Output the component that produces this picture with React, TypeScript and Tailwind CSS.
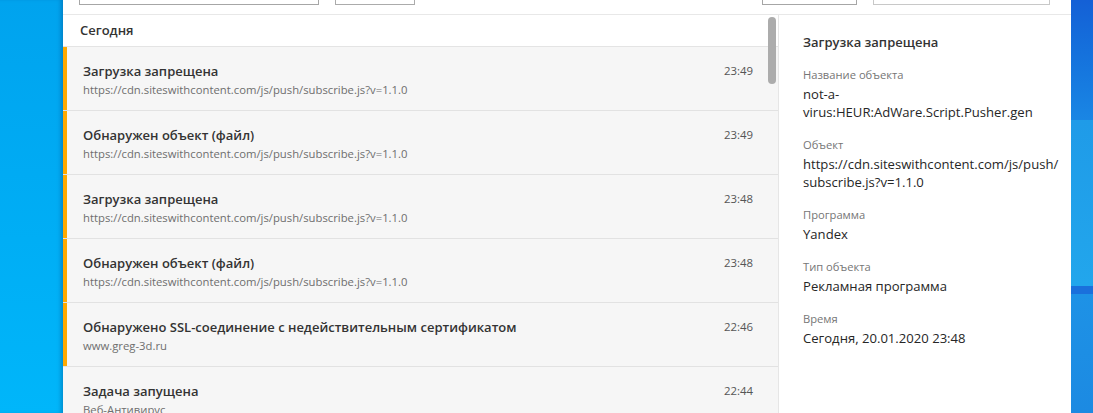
const events = [
  { title: 'Загрузка запрещена', sub: 'https://cdn.siteswithcontent.com/js/push/subscribe.js?v=1.1.0', time: '23:49', warn: true },
  { title: 'Обнаружен объект (файл)', sub: 'https://cdn.siteswithcontent.com/js/push/subscribe.js?v=1.1.0', time: '23:49', warn: true },
  { title: 'Загрузка запрещена', sub: 'https://cdn.siteswithcontent.com/js/push/subscribe.js?v=1.1.0', time: '23:48', warn: true },
  { title: 'Обнаружен объект (файл)', sub: 'https://cdn.siteswithcontent.com/js/push/subscribe.js?v=1.1.0', time: '23:48', warn: true },
  { title: 'Обнаружено SSL-соединение с недействительным сертификатом', sub: 'www.greg-3d.ru', time: '22:46', warn: true },
  { title: 'Задача запущена', sub: 'Веб-Антивирус', time: '22:44', warn: false },
]

const details = [
  { label: 'Название объекта', value: 'not-a-virus:HEUR:AdWare.Script.Pusher.gen' },
  { label: 'Объект', value: 'https://cdn.siteswithcontent.com/js/push/subscribe.js?v=1.1.0' },
  { label: 'Программа', value: 'Yandex' },
  { label: 'Тип объекта', value: 'Рекламная программа' },
  { label: 'Время', value: 'Сегодня, 20.01.2020 23:48' },
]

export default function App() {
  return (
    <div className="w-[1093px] h-[413px] flex overflow-hidden font-['Open_Sans',sans-serif]">
      {/* desktop left */}
      <div className="w-[63px] shrink-0 bg-gradient-to-b from-[#00a3ee] to-[#00b6fa] shadow-[inset_-4px_0_4px_-2px_rgba(0,60,120,0.35)]" />

      {/* window */}
      <div className="w-[1008px] shrink-0 bg-white flex flex-col">
        {/* toolbar, inputs cut off at top */}
        <div className="h-[15px] border-b border-[#e8e8e8] overflow-hidden flex items-end pb-[9px]">
          <div className="ml-[16px] w-[240px] h-[30px] border border-[#a6a6a6] shrink-0" />
          <div className="ml-[16px] w-[80px] h-[30px] border border-[#ababab] shrink-0" />
          <div className="ml-auto w-[95px] h-[30px] border border-[#a6a6a6] shrink-0" />
          <div className="ml-[16px] mr-[21px] w-[177px] h-[30px] border border-[#c8c8c8] shrink-0" />
        </div>

        <div className="flex flex-1 min-h-0">
          {/* events list */}
          <div className="relative w-[716px] shrink-0 border-r border-[#e6e6e6] bg-[#f6f6f6]">
            <div className="h-[32px] bg-white border-b border-[#e4e4e4] flex items-center pl-[17px] text-[13px] font-semibold text-[#333]">
              Сегодня
            </div>
            {events.map((e, i) => (
              <div key={i} className="h-[64px] flex border-b border-[#e2e2e2]">
                <div className={e.warn ? 'w-[4px] bg-[#ffa900] shrink-0' : 'w-[4px] shrink-0'} />
                <div className="flex-1 flex pl-[16px] pr-[25px] pt-[14px]">
                  <div className="flex-1 min-w-0">
                    <div className="text-[13px] leading-[20px] font-semibold text-[#333]">{e.title}</div>
                    <div className="text-[11.3px] leading-[18px] text-[#6e6e6e]">{e.sub}</div>
                  </div>
                  <div className="text-[11.4px] leading-[20px] text-[#555]">{e.time}</div>
                </div>
              </div>
            ))}
            <div className="absolute top-[2px] right-[2px] w-[8px] h-[67px] rounded-full bg-[#acacac]" />
          </div>

          {/* details */}
          <div className="flex-1 min-w-0 pl-[24px] pr-[10px] pt-[17px]">
            <div className="text-[13px] leading-[20px] font-semibold text-[#333]">Загрузка запрещена</div>
            <div className="mt-[15px] flex flex-col gap-[16px]">
              {details.map((d, i) => (
                <div key={i}>
                  <div className="text-[11.2px] leading-[16px] text-[#767676]">{d.label}</div>
                  <div className="mt-[2px] text-[13.1px] leading-[18px] text-[#262626] break-words">{d.value}</div>
                </div>
              ))}
            </div>
          </div>
        </div>
      </div>

      {/* desktop right */}
      <div className="flex-1 flex flex-col">
        <div className="h-[120px] bg-gradient-to-b from-[#1460d6] to-[#1a86e4]" />
        <div className="h-[166px] bg-gradient-to-b from-[#1f9be8] to-[#22a6ec]" />
        <div className="h-[8px] bg-[#1a70dc]" />
        <div className="flex-1 bg-gradient-to-b from-[#1e92e6] to-[#1c8ae2]" />
      </div>
    </div>
  )
}
